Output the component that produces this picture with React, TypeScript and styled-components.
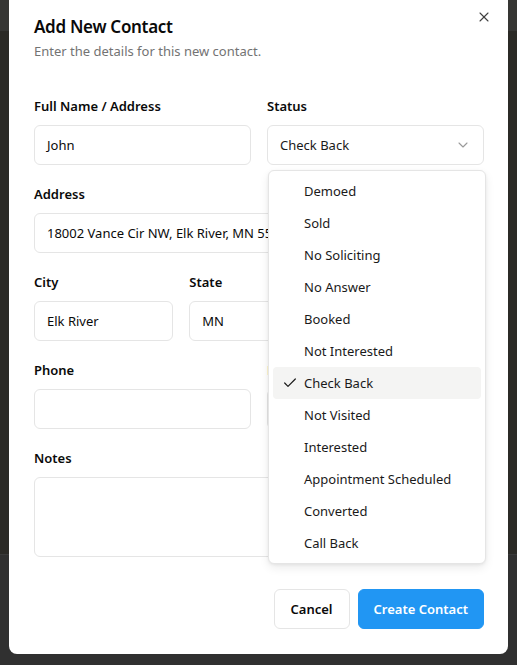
import React from 'react';
import styled, { createGlobalStyle } from 'styled-components';
import { X, ChevronDown, Check } from 'lucide-react';

const GlobalStyle = createGlobalStyle`
  html, body {
    margin: 0;
    padding: 0;
  }
  body {
    font-family: 'Noto Sans', 'Open Sans', sans-serif;
    background: #2b2a26;
  }
  * {
    box-sizing: border-box;
  }
`;

const Page = styled.div`
  position: relative;
  width: 517px;
  height: 665px;
  overflow: hidden;
  background: #2b2a26;
`;

const PageHeader = styled.div`
  height: 31px;
  background: #363634;
`;

const PageFooter = styled.div`
  position: absolute;
  left: 0;
  right: 0;
  bottom: 0;
  height: 111px;
  background: #303030;
  border-top: 1px solid #3a3a3a;
`;

const Overlay = styled.div`
  position: absolute;
  inset: 0;
  display: flex;
  justify-content: center;
  align-items: flex-start;
`;

const Dialog = styled.div`
  position: relative;
  width: 499px;
  background: #ffffff;
  border-radius: 0 0 8px 8px;
  padding: 13px 24px 25px 25px;
`;

const CloseButton = styled.button`
  position: absolute;
  top: 9px;
  right: 16px;
  width: 16px;
  height: 16px;
  padding: 0;
  border: none;
  background: none;
  color: #404040;
  display: flex;
  align-items: center;
  justify-content: center;
`;

const Title = styled.h2`
  margin: 0;
  font-size: 17px;
  letter-spacing: -0.3px;
  line-height: 28px;
  font-weight: 600;
  color: #0a0a0a;
`;

const Subtitle = styled.p`
  margin: 0;
  font-size: 13px;
  line-height: 20px;
  color: #737373;
`;

const Form = styled.div`
  margin-top: 35px;
  display: flex;
  flex-direction: column;
  gap: 19px;
`;

const Row = styled.div<{ $cols: number }>`
  display: grid;
  grid-template-columns: repeat(${p => p.$cols}, 1fr);
  column-gap: 16px;
`;

const Field = styled.div`
  position: relative;
  display: flex;
  flex-direction: column;
  gap: 9px;
`;

const Label = styled.label`
  font-size: 13px;
  line-height: 20px;
  font-weight: 600;
  color: #0a0a0a;
`;

const Input = styled.div<{ $tall?: boolean }>`
  height: ${p => (p.$tall ? '80px' : '40px')};
  border: 1px solid #e5e5e5;
  border-radius: 6px;
  padding: 0 12px;
  display: flex;
  align-items: ${p => (p.$tall ? 'flex-start' : 'center')};
  font-size: 13px;
  color: #0a0a0a;
  white-space: nowrap;
  overflow: hidden;
`;

const SelectTrigger = styled(Input)`
  justify-content: space-between;
  color: #1a1a1a;
  svg {
    color: #9a9a9a;
  }
`;

const Menu = styled.div`
  position: absolute;
  top: 74px;
  left: 1px;
  width: 218px;
  z-index: 5;
  background: #ffffff;
  border: 1px solid #e5e5e5;
  border-radius: 6px;
  box-shadow: 0 4px 10px rgba(0, 0, 0, 0.08), 0 1px 3px rgba(0, 0, 0, 0.06);
  padding: 4px;
`;

const Option = styled.div<{ $active?: boolean }>`
  position: relative;
  height: 32px;
  border-radius: 4px;
  padding-left: 31px;
  display: flex;
  align-items: center;
  font-size: 13px;
  color: #1a1a1a;
  background: ${p => (p.$active ? '#f4f4f3' : 'transparent')};
`;

const CheckMark = styled.span`
  position: absolute;
  left: 9px;
  top: 8px;
  display: flex;
  color: #1a1a1a;
`;

const Footer = styled.div`
  margin-top: 32px;
  display: flex;
  justify-content: flex-end;
  gap: 8px;
`;

const Button = styled.button<{ $primary?: boolean }>`
  height: 40px;
  min-width: 76px;
  padding: 0 15px;
  border-radius: 6px;
  font-family: inherit;
  font-size: 13px;
  font-weight: 600;
  border: 1px solid ${p => (p.$primary ? '#2196f3' : '#e5e5e5')};
  background: ${p => (p.$primary ? '#2196f3' : '#ffffff')};
  color: ${p => (p.$primary ? '#ffffff' : '#0a0a0a')};
`;

const statuses = [
  'Demoed',
  'Sold',
  'No Soliciting',
  'No Answer',
  'Booked',
  'Not Interested',
  'Check Back',
  'Not Visited',
  'Interested',
  'Appointment Scheduled',
  'Converted',
  'Call Back',
];

const App = () => {
  const selected = 'Check Back';

  return (
    <Page>
      <GlobalStyle />
      <PageHeader />
      <PageFooter />
      <Overlay>
        <Dialog>
          <CloseButton aria-label="Close">
            <X size={16} strokeWidth={1.6} />
          </CloseButton>
          <Title>Add New Contact</Title>
          <Subtitle>Enter the details for this new contact.</Subtitle>

          <Form>
            <Row $cols={2}>
              <Field>
                <Label>Full Name / Address</Label>
                <Input>John</Input>
              </Field>
              <Field>
                <Label>Status</Label>
                <SelectTrigger>
                  {selected}
                  <ChevronDown size={16} strokeWidth={1.6} />
                </SelectTrigger>
                <Menu>
                  {statuses.map(s => (
                    <Option key={s} $active={s === selected}>
                      {s === selected && (
                        <CheckMark>
                          <Check size={16} strokeWidth={1.8} />
                        </CheckMark>
                      )}
                      {s}
                    </Option>
                  ))}
                </Menu>
              </Field>
            </Row>

            <Row $cols={1}>
              <Field>
                <Label>Address</Label>
                <Input>18002 Vance Cir NW, Elk River, MN 55330</Input>
              </Field>
            </Row>

            <Row $cols={3}>
              <Field>
                <Label>City</Label>
                <Input>Elk River</Input>
              </Field>
              <Field>
                <Label>State</Label>
                <Input>MN</Input>
              </Field>
              <Field>
                <Label>Zip</Label>
                <Input>55330</Input>
              </Field>
            </Row>

            <Row $cols={2}>
              <Field>
                <Label>Phone</Label>
                <Input />
              </Field>
              <Field>
                <Label>Email</Label>
                <Input />
              </Field>
            </Row>

            <Row $cols={1}>
              <Field>
                <Label>Notes</Label>
                <Input $tall />
              </Field>
            </Row>
          </Form>

          <Footer>
            <Button>Cancel</Button>
            <Button $primary>Create Contact</Button>
          </Footer>
        </Dialog>
      </Overlay>
    </Page>
  );
};

export default App;
